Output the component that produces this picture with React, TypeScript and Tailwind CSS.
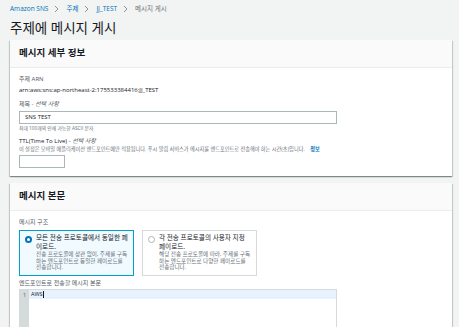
import React from 'react';

const font = { fontFamily: '"Open Sans", "Noto Sans CJK KR", sans-serif' };

const Crumb = ({ children, link }: { children: React.ReactNode; link?: boolean }) => (
  <span className={link ? 'text-[#0073bb]' : 'text-[#687078]'}>{children}</span>
);

const Sep = () => (
  <svg width="6" height="8" viewBox="0 0 6 8" className="mx-[6px]">
    <path d="M1 1l3 3-3 3" fill="none" stroke="#879596" strokeWidth="1" />
  </svg>
);

const Card = ({ title, children }: { title: string; children: React.ReactNode }) => (
  <div className="bg-white shadow-[0_1px_1px_0_rgba(0,28,36,0.3),1px_1px_1px_0_rgba(0,28,36,0.15),-1px_1px_1px_0_rgba(0,28,36,0.15)]">
    <div className="h-[28px] bg-[#fafafa] border-b border-[#eaeded] px-[9px] flex items-center">
      <h2 className="text-[9.5px] font-bold text-[#16191f]">{title}</h2>
    </div>
    <div className="px-[9px] pt-[4px]">{children}</div>
  </div>
);

const Radio = ({ checked, title, desc }: { checked?: boolean; title: string; desc: string }) => (
  <div
    className={
      'w-[115px] h-[46px] border px-[5px] pt-[3px] flex gap-[4px] ' +
      (checked ? 'border-[#00a1c9] bg-[#f1faff]' : 'border-[#d5dbdb] bg-white')
    }
  >
    <div
      className={
        'mt-[2px] shrink-0 w-[7px] h-[7px] rounded-full ' +
        (checked ? 'border-[2px] border-[#0073bb] bg-white' : 'border border-[#aab7b8] bg-white')
      }
    />
    <div>
      <div className="text-[6.6px] leading-[8.5px] text-[#16191f]">{title}</div>
      <div className="text-[5.6px] leading-[6.5px] text-[#687078]">{desc}</div>
    </div>
  </div>
);

export default function App() {
  return (
    <div className="w-[459px] h-[327px] overflow-hidden bg-[#f2f3f3] px-[10px]" style={font}>
      <div className="h-[17px] flex items-center pt-[1px] text-[6.5px]">
        <Crumb link>Amazon SNS</Crumb>
        <Sep />
        <Crumb link>주제</Crumb>
        <Sep />
        <Crumb link>JJ_TEST</Crumb>
        <Sep />
        <Crumb>메시지 게시</Crumb>
      </div>
      <h1 className="text-[13.5px] leading-[20px] text-[#16191f] mt-[1px] mb-[2px]">주제에 메시지 게시</h1>

      <div className="w-[442px] flex flex-col gap-[7px]">
        <Card title="메시지 세부 정보">
          <div className="text-[6px] leading-[9px] text-[#545b64] mt-[3px]">주제 ARN</div>
          <div className="text-[6px] leading-[9px] text-[#16191f] mt-[2px]">arn:aws:sns:ap-northeast-2:175533384416:JJ_TEST</div>

          <div className="text-[6px] leading-[9px] text-[#545b64] mt-[5px]">
            제목 - <i>선택 사항</i>
          </div>
          <div className="mt-[2px] w-[318px] h-[13px] border border-[#aab7b8] px-[5px] flex items-center text-[6px] text-[#16191f]">
            SNS TEST
          </div>
          <div className="text-[4.8px] leading-[7px] text-[#687078] mt-[1px]">최대 100개의 인쇄 가능한 ASCII 문자</div>

          <div className="text-[6px] leading-[9px] text-[#16191f] mt-[5px]">
            TTL(Time To Live) - <i className="text-[#545b64]">선택 사항</i>
          </div>
          <div className="text-[5.2px] leading-[7px] text-[#687078]">
            이 설정은 모바일 애플리케이션 엔드포인트에만 적용됩니다. 푸시 알림 서비스가 메시지를 엔드포인트로 전송해야 하는 시간(초)입니다.{' '}
            <span className="text-[#0073bb] font-bold ml-[4px]">정보</span>
          </div>
          <div className="mt-[2px] mb-[8px] w-[46px] h-[13px] border border-[#aab7b8] bg-white" />
        </Card>

        <Card title="메시지 본문">
          <div className="text-[6px] leading-[9px] text-[#545b64] mt-[3px]">메시지 구조</div>
          <div className="flex gap-[8px] mt-[3px]">
            <Radio
              checked
              title="모든 전송 프로토콜에서 동일한 페이로드."
              desc="전송 프로토콜에 상관 없이, 주제를 구독하는 엔드포인트로 동일한 페이로드를 전송합니다."
            />
            <Radio
              title="각 전송 프로토콜의 사용자 지정 페이로드."
              desc="해당 전송 프로토콜에 따라, 주제를 구독하는 엔드포인트로 다양한 페이로드를 전송합니다."
            />
          </div>
          <div className="text-[6px] leading-[9px] text-[#545b64] mt-[3px]">엔드포인트로 전송할 메시지 본문</div>
          <div className="mt-[1px] w-[318px] h-[60px] border border-[#d5dbdb] flex">
            <div className="w-[9px] bg-[#d5dbdb] text-[5.5px] text-[#545b64] text-center pt-[1px]">1</div>
            <div className="flex-1">
              <div className="h-[9px] bg-[#e8f2fe] text-[5.5px] leading-[9px] text-[#16191f] pl-[2px] flex items-center">
                AWS<span className="w-[1px] h-[7px] bg-[#16191f]" />
              </div>
            </div>
          </div>
        </Card>
      </div>
    </div>
  );
}
